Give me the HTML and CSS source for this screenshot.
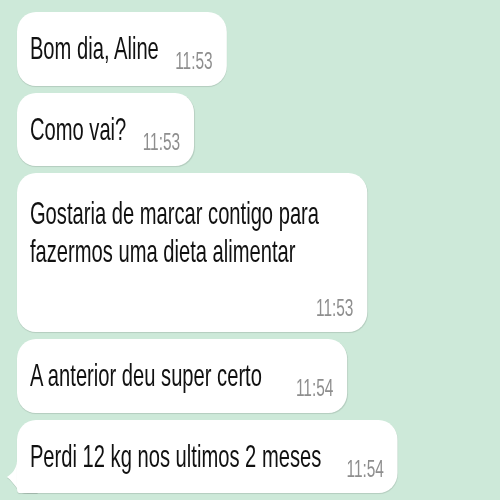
FILE: index.html
```html
<!DOCTYPE html>
<html lang="pt">
<head>
<meta charset="utf-8">
<link rel="stylesheet" href="styles.css">
</head>
<body>
<div class="chat">
  <div class="bubble">
    <span class="text">Bom dia, Aline</span>
    <span class="time">11:53</span>
  </div>
  <div class="bubble">
    <span class="text">Como vai?</span>
    <span class="time">11:53</span>
  </div>
  <div class="bubble bubble--wrap">
    <span class="text">Gostaria de marcar contigo para fazermos uma dieta alimentar</span>
    <span class="time">11:53</span>
  </div>
  <div class="bubble bubble--loose">
    <span class="text">A anterior deu super certo</span>
    <span class="time">11:54</span>
  </div>
  <div class="bubble bubble--tail">
    <span class="text">Perdi 12 kg nos ultimos 2 meses</span>
    <span class="time">11:54</span>
    <svg class="tail" viewBox="0 0 60 40" width="60" height="40" aria-hidden="true">
      <path d="M27 0 L27 8 C26 16 19 21 11 24 C18 27 23 32 28 36 C31 38.5 36 40 44 40 L60 40 L60 0 Z" fill="#ffffff"/>
    </svg>
  </div>
</div>
</body>
</html>
```
FILE: styles.css
```css
html, body {
  margin: 0;
  padding: 0;
  overflow: hidden;
}

body {
  width: 500px;
  height: 500px;
  background: #cde9d9;
  font-family: "Liberation Sans", Arial, sans-serif;
}

.chat {
  box-sizing: border-box;
  width: 790px;
  padding: 12px 0 0 27px;
  display: flex;
  flex-direction: column;
  align-items: flex-start;
  gap: 7px;
  transform: scaleX(0.63);
  transform-origin: 0 0;
}

.bubble {
  position: relative;
  display: flex;
  flex-wrap: wrap;
  align-items: flex-end;
  gap: 0 26px;
  background: #ffffff;
  border-radius: 30px / 20px;
  padding: 18px 22px 13.5px 20.5px;
  box-shadow: 0 1px 1px rgba(0, 0, 0, 0.12);
}

.text {
  font-size: 32px;
  line-height: 36px;
  color: #111111;
  padding-bottom: 6px;
}

.time {
  font-size: 24.5px;
  line-height: 22px;
  color: #8e8e8e;
  margin-left: auto;
}

.bubble--wrap {
  box-sizing: border-box;
  width: 556px;
  padding-top: 21px;
}

.bubble--wrap .text {
  line-height: 38px;
}

.bubble--wrap .time {
  margin-top: 20.5px;
}

.bubble--loose {
  gap: 0 54px;
}

.bubble--tail {
  gap: 0 40px;
  border-bottom-left-radius: 4px;
}

.tail {
  position: absolute;
  left: -27px;
  bottom: 0;
  filter: drop-shadow(0 1px 0.5px rgba(0, 0, 0, 0.12));
  z-index: -1;
}
```
